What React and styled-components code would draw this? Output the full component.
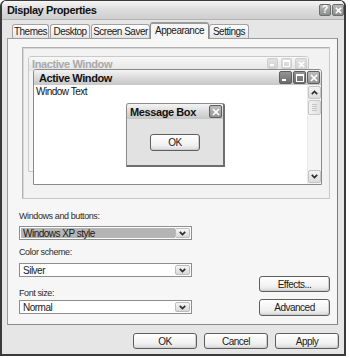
import React from "react";
import styled, { createGlobalStyle, css } from "styled-components";

const FONT = `"Liberation Sans", Arial, sans-serif`;

const Global = createGlobalStyle`
  html, body { margin: 0; padding: 0; background: #fff; }
  body { font-family: ${FONT}; color: #111; white-space: nowrap; }
  * { box-sizing: border-box; }
`;

const Dialog = styled.div`
  width: 346px;
  height: 356px;
  border: 2px solid #3a3a3a;
  border-top-width: 1px;
  border-radius: 6px 6px 0 0;
  background: #e6e6e6;
  display: flex;
  flex-direction: column;
  overflow: hidden;
`;

const TitleBar = styled.div`
  flex: none;
  height: 19px;
  display: flex;
  align-items: center;
  justify-content: space-between;
  padding: 0 0 0 5px;
  background: linear-gradient(#f6f6f6, #dedede 45%, #cfcfcf);
  border-bottom: 1px solid #b4b4b4;
`;

const Title = styled.div`
  font-weight: bold;
  font-size: 11px;
  letter-spacing: -0.4px;
  color: #111;
`;

const CapButtons = styled.div`
  display: flex;
  gap: 1px;
`;

const CapButton = styled.div`
  width: 12px;
  height: 12px;
  border: 1px solid #6e6e6e;
  border-radius: 2px;
  background: linear-gradient(#b8b8b8, #8e8e8e);
  color: #fff;
  font-size: 10px;
  font-weight: bold;
  display: flex;
  align-items: center;
  justify-content: center;
  line-height: 1;
`;

const Body = styled.div`
  flex: 1;
  display: flex;
  flex-direction: column;
  padding: 2px 4px 0 5px;
`;

const TabRow = styled.div`
  display: flex;
  height: 16px;
  padding-left: 5px;
  align-items: flex-end;
`;

const Tab = styled.div`
  width: ${(p) => p.$w}px;
  height: 14px;
  border: 1px solid #a2a2a2;
  border-bottom: none;
  border-radius: 3px 3px 0 0;
  background: linear-gradient(#ffffff, #eeeeee 70%, #e2e2e2);
  font-size: 10px;
  letter-spacing: -0.5px;
  color: #1a1a1a;
  display: flex;
  align-items: center;
  justify-content: center;
  margin-right: 1px;
  ${(p) =>
    p.$active &&
    css`
      height: 17px;
      margin: 0 0 -1px -1px;
      position: relative;
      z-index: 1;
      background: #f6f6f6;
      border-color: #8c8c8c;
      border-top: 2px solid #9a9a9a;
      padding-bottom: 2px;
    `}
`;

const Panel = styled.div`
  width: 331px;
  height: 287px;
  border: 1px solid #9c9c9c;
  border-right-color: #7c7c7c;
  border-bottom-color: #8a8a8a;
  background: #f6f6f6;
  display: flex;
  flex-direction: column;
  padding: 8px 7px 0 11px;
`;

const Preview = styled.div`
  position: relative;
  width: 308px;
  height: 152px;
  margin-left: 3px;
  border: 1px solid #b0b0b0;
  border-right-color: #c8c8c8;
  border-bottom-color: #c8c8c8;
  background: #f2f2f2;
  box-shadow: inset 1px 1px 0 #d8d8d8;
`;

const Win = styled.div`
  position: absolute;
  left: ${(p) => p.$x}px;
  top: ${(p) => p.$y}px;
  width: ${(p) => p.$w}px;
  height: ${(p) => p.$h}px;
  display: flex;
  flex-direction: column;
  border: 1px solid ${(p) => (p.$faded ? "#c9c9c9" : "#8a8a8a")};
  border-radius: 3px 3px 0 0;
  background: ${(p) => (p.$faded ? "#f4f4f4" : "#fff")};
`;

const WinTitle = styled.div`
  flex: none;
  height: ${(p) => p.$h}px;
  display: flex;
  align-items: center;
  justify-content: space-between;
  padding: 0 1px 0 ${(p) => p.$pl}px;
  font-weight: bold;
  font-size: 11px;
  letter-spacing: -0.4px;
  color: ${(p) => (p.$faded ? "#a9a9a9" : "#111")};
  background: ${(p) =>
    p.$faded
      ? "linear-gradient(#f8f8f8, #ececec 60%, #e4e4e4)"
      : "linear-gradient(#f4f4f4, #dcdcdc 50%, #c6c6c6)"};
  border-radius: 2px 2px 0 0;
`;

const WinButtons = styled.div`
  display: flex;
  gap: ${(p) => p.$gap}px;
`;

const WinButton = styled.div`
  width: ${(p) => p.$s}px;
  height: ${(p) => p.$s}px;
  border-radius: 2px;
  border: 1px solid ${(p) => (p.$faded ? "#cfcfcf" : "#5e5e5e")};
  background: ${(p) =>
    p.$faded
      ? "linear-gradient(#e2e2e2, #d2d2d2)"
      : p.$light
      ? "linear-gradient(#bdbdbd, #959595)"
      : "linear-gradient(#959595, #6c6c6c)"};
  display: flex;
  align-items: ${(p) => (p.$min ? "flex-end" : "center")};
  justify-content: ${(p) => (p.$min ? "flex-start" : "center")};
  padding: ${(p) => (p.$min ? "0 0 2px 2px" : "0")};
`;

const MinBar = styled.div`
  width: 4px;
  height: 2px;
  background: #fff;
`;

const MaxBox = styled.div`
  width: ${(p) => p.$s}px;
  height: ${(p) => p.$s}px;
  border: 1px solid #fff;
  border-top-width: 2px;
`;

const WinBody = styled.div`
  flex: 1;
  display: flex;
  min-height: 0;
`;

const WinContent = styled.div`
  flex: 1;
  font-size: 10px;
  letter-spacing: -0.5px;
  padding: 1px 0 0 2px;
  color: #111;
`;

const ScrollBar = styled.div`
  width: 14px;
  display: flex;
  flex-direction: column;
  background: #f4f4f4;
  border-left: 1px solid #eaeaea;
  padding: 1px 0;
`;

const ScrollArrow = styled.div`
  height: 13px;
  border: 1px solid #c4c4c4;
  border-radius: 2px;
  background: linear-gradient(#f4f4f4, #dcdcdc);
  display: flex;
  align-items: center;
  justify-content: center;
`;

const Thumb = styled.div`
  height: 15px;
  margin-top: 1px;
  border: 1px solid #c8c8c8;
  border-radius: 2px;
  background: linear-gradient(90deg, #f2f2f2, #e2e2e2);
  display: flex;
  flex-direction: column;
  align-items: center;
  justify-content: center;
  gap: 1px;
`;

const Grip = styled.div`
  width: 5px;
  height: 1px;
  background: #c6c6c6;
`;

const Track = styled.div`
  flex: 1;
`;

const MsgBox = styled.div`
  position: absolute;
  left: 103px;
  top: 55px;
  width: 99px;
  height: 64px;
  border: 1px solid #8c8c8c;
  border-right: 2px solid #6e6e6e;
  border-bottom: 2px solid #6e6e6e;
  border-radius: 3px 3px 0 0;
  background: #e2e2e2;
  display: flex;
  flex-direction: column;
`;

const MsgBody = styled.div`
  flex: 1;
  display: flex;
  align-items: center;
  justify-content: center;
`;

const Button = styled.div`
  width: ${(p) => p.$w}px;
  height: ${(p) => p.$h || 16}px;
  border: 1px solid #5e5e5e;
  border-radius: 3px;
  background: linear-gradient(#ffffff, #f0f0f0 70%, #d9d9d9);
  box-shadow: inset -1px -1px 0 #cfcfcf;
  font-size: 10px;
  letter-spacing: -0.5px;
  color: #1a1a1a;
  display: flex;
  align-items: center;
  justify-content: center;
`;

const Controls = styled.div`
  flex: 1;
  display: grid;
  grid-template-columns: 173px 1fr;
  padding-bottom: 8px;
`;

const Fields = styled.div`
  display: flex;
  flex-direction: column;
  padding-top: 11px;
`;

const Label = styled.div`
  font-size: 9px;
  letter-spacing: -0.4px;
  line-height: 12px;
  height: 12px;
  color: #2a2a2a;
  margin-top: ${(p) => p.$mt}px;
  margin-bottom: ${(p) => p.$mb}px;
`;

const Select = styled.div`
  height: 14px;
  border: 1px solid #8e8e8e;
  background: #fff;
  display: flex;
  align-items: stretch;
  padding: 1px;
`;

const SelectValue = styled.div`
  flex: 1;
  font-size: 10px;
  letter-spacing: -0.5px;
  line-height: 10px;
  padding: 1px 0 0 2px;
  color: #1a1a1a;
  background: ${(p) => (p.$hl ? "#b4b4b4" : "transparent")};
`;

const SelectArrow = styled.div`
  width: 15px;
  border: 1px solid #bcbcbc;
  border-radius: 2px;
  background: linear-gradient(#f6f6f6, #d8d8d8);
  display: flex;
  align-items: center;
  justify-content: center;
`;

const SideButtons = styled.div`
  justify-self: end;
  align-self: end;
  display: flex;
  flex-direction: column;
  gap: 7px;
`;

const Footer = styled.div`
  display: flex;
  justify-content: flex-end;
  gap: 7px;
  padding: 8px 1px 0 0;
`;

const Chevron = ({ up }) => (
  <svg width="7" height="5" viewBox="0 0 7 5">
    <path
      d={up ? "M0.8 4.2 L3.5 1.4 L6.2 4.2" : "M0.8 0.8 L3.5 3.6 L6.2 0.8"}
      fill="none"
      stroke="#2e2e2e"
      strokeWidth="1.7"
    />
  </svg>
);

const XGlyph = ({ s = 8, color = "#fff" }) => (
  <svg width={s} height={s} viewBox="0 0 8 8">
    <path d="M1 1 L7 7 M7 1 L1 7" stroke={color} strokeWidth="1.7" />
  </svg>
);

const Dropdown = ({ value, hl }) => (
  <Select>
    <SelectValue $hl={hl}>{value}</SelectValue>
    <SelectArrow>
      <Chevron />
    </SelectArrow>
  </Select>
);

const tabs = [
  { t: "Themes", w: 37 },
  { t: "Desktop", w: 40 },
  { t: "Screen Saver", w: 59 },
  { t: "Appearance", w: 59, active: true },
  { t: "Settings", w: 40 },
];

export default function App() {
  return (
    <>
      <Global />
      <Dialog>
        <TitleBar>
          <Title>Display Properties</Title>
          <CapButtons>
            <CapButton>?</CapButton>
            <CapButton>
              <XGlyph s={7} />
            </CapButton>
          </CapButtons>
        </TitleBar>
        <Body>
          <TabRow>
            {tabs.map((t) => (
              <Tab key={t.t} $w={t.w} $active={t.active}>
                {t.t}
              </Tab>
            ))}
          </TabRow>
          <Panel>
            <Preview>
              <Win $x={5} $y={8} $w={281} $h={116} $faded>
                <WinTitle $h={14} $pl={3} $faded>
                  Inactive Window
                  <WinButtons $gap={3}>
                    <WinButton $s={11} $faded $min>
                      <MinBar />
                    </WinButton>
                    <WinButton $s={11} $faded>
                      <MaxBox $s={7} />
                    </WinButton>
                    <WinButton $s={12} $faded>
                      <XGlyph s={7} />
                    </WinButton>
                  </WinButtons>
                </WinTitle>
              </Win>
              <Win $x={10} $y={21} $w={289} $h={116}>
                <WinTitle $h={15} $pl={5}>
                  Active Window
                  <WinButtons $gap={1}>
                    <WinButton $s={13} $min>
                      <MinBar />
                    </WinButton>
                    <WinButton $s={13}>
                      <MaxBox $s={8} />
                    </WinButton>
                    <WinButton $s={13} $light>
                      <XGlyph s={8} />
                    </WinButton>
                  </WinButtons>
                </WinTitle>
                <WinBody>
                  <WinContent>Window Text</WinContent>
                  <ScrollBar>
                    <ScrollArrow>
                      <Chevron up />
                    </ScrollArrow>
                    <Thumb>
                      <Grip />
                      <Grip />
                      <Grip />
                      <Grip />
                    </Thumb>
                    <Track />
                    <ScrollArrow>
                      <Chevron />
                    </ScrollArrow>
                  </ScrollBar>
                </WinBody>
              </Win>
              <MsgBox>
                <WinTitle $h={15} $pl={3}>
                  Message Box
                  <WinButton $s={13} $light>
                    <XGlyph s={8} />
                  </WinButton>
                </WinTitle>
                <MsgBody>
                  <Button $w={50} $h={17}>
                    OK
                  </Button>
                </MsgBody>
              </MsgBox>
            </Preview>
            <Controls>
              <Fields>
                <Label $mt={0} $mb={4}>
                  Windows and buttons:
                </Label>
                <Dropdown value="Windows XP style" hl />
                <Label $mt={6} $mb={5}>
                  Color scheme:
                </Label>
                <Dropdown value="Silver" />
                <Label $mt={10} $mb={1}>
                  Font size:
                </Label>
                <Dropdown value="Normal" />
              </Fields>
              <SideButtons>
                <Button $w={71}>Effects...</Button>
                <Button $w={71} $h={17}>
                  Advanced
                </Button>
              </SideButtons>
            </Controls>
          </Panel>
          <Footer>
            <Button $w={64}>OK</Button>
            <Button $w={64}>Cancel</Button>
            <Button $w={64}>Apply</Button>
          </Footer>
        </Body>
      </Dialog>
    </>
  );
}
